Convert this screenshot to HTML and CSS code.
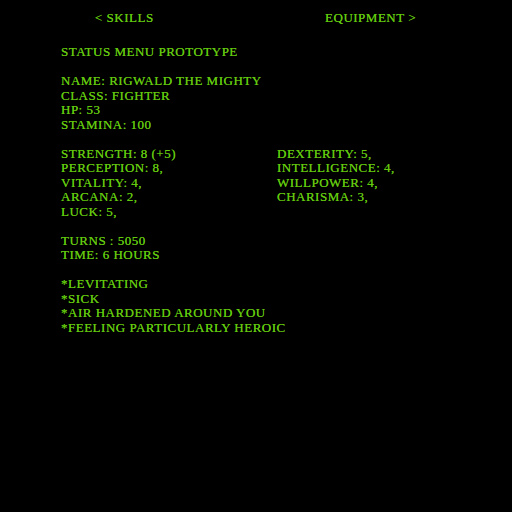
FILE: index.html
```html
<!DOCTYPE html>
<html>
<head>
<meta charset="utf-8">
<link rel="stylesheet" href="styles.css">
</head>
<body>
<nav class="nav">
  <span class="nav-prev">&lt; Skills</span>
  <span class="nav-next">Equipment &gt;</span>
</nav>
<main class="panel">
  <h1 class="title">Status Menu Prototype</h1>
  <section class="block">
    <div>Name: Rigwald the Mighty</div>
    <div>Class: Fighter</div>
    <div>HP: 53</div>
    <div>Stamina: 100</div>
  </section>
  <section class="block stats">
    <div>Strength: 8 (+5)</div><div>Dexterity: 5,</div>
    <div>Perception: 8,</div><div>Intelligence: 4,</div>
    <div>Vitality: 4,</div><div>Willpower: 4,</div>
    <div>Arcana: 2,</div><div>Charisma: 3,</div>
    <div>Luck: 5,</div>
  </section>
  <section class="block">
    <div>Turns : 5050</div>
    <div>Time: 6 hours</div>
  </section>
  <section class="block">
    <div>*Levitating</div>
    <div>*Sick</div>
    <div>*Air hardened around you</div>
    <div>*Feeling particularly heroic</div>
  </section>
</main>
</body>
</html>
```
FILE: styles.css
```css
html, body {
  margin: 0;
  padding: 0;
  background: #000;
}
body {
  width: 512px;
  height: 512px;
  color: #62c80e;
  font-family: "Liberation Serif", "DejaVu Serif", serif;
  font-size: 13px;
  letter-spacing: 0.5px;
  line-height: 14.5px;
  text-transform: uppercase;
  text-shadow: 0 0 0.2px #62c80e;
}
.nav {
  display: flex;
  padding: 11px 0 0 95px;
  height: 14.5px;
}
.nav-next {
  margin-left: auto;
  margin-right: 96px;
}
.panel {
  padding: 19.5px 0 0 61px;
}
.title {
  margin: 0 0 14.5px;
  font-size: 13px;
  font-weight: normal;
  line-height: 14.5px;
}
.block {
  margin-bottom: 14.5px;
}
.stats {
  display: grid;
  grid-template-columns: 216px auto;
}
```
